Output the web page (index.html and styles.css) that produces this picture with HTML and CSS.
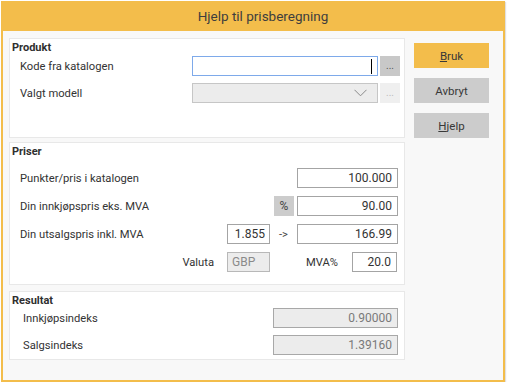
FILE: index.html
```html
<!DOCTYPE html>
<html lang="no">
<head>
    <meta charset="UTF-8">
    <title>Hjelp til prisberegning</title>
    <link rel="stylesheet" href="styles.css">
</head>
<body>
    <div class="window">
        <div class="titlebar">Hjelp til prisberegning</div>
        <div class="window-body">
            <div class="panels">
                <!-- Produkt -->
                <div class="panel panel-produkt">
                    <div class="panel-title">Produkt</div>
                    <div class="row">
                        <span class="label wide">Kode fra katalogen</span>
                        <div class="field field-code focused"><span class="caret"></span></div>
                        <div class="dots">...</div>
                    </div>
                    <div class="row row-gap">
                        <span class="label wide">Valgt modell</span>
                        <div class="field field-code disabled">
                            <svg class="chevron" width="13" height="8" viewBox="0 0 13 8">
                                <polyline points="0.5,0.8 6.5,6.8 12.5,0.8" fill="none" stroke="#8a8a8a" stroke-width="1"/>
                            </svg>
                        </div>
                        <div class="dots dots-off">...</div>
                    </div>
                </div>

                <!-- Priser -->
                <div class="panel panel-priser">
                    <div class="panel-title">Priser</div>
                    <div class="row">
                        <span class="label">Punkter/pris i katalogen</span>
                        <div class="field num">100.000</div>
                    </div>
                    <div class="row row-gap2">
                        <span class="label">Din innkjøpspris eks. MVA</span>
                        <div class="pct">%</div>
                        <div class="field num">90.00</div>
                    </div>
                    <div class="row row-gap2">
                        <span class="label">Din utsalgspris inkl. MVA</span>
                        <div class="field small">1.855</div>
                        <span class="arrow">-&gt;</span>
                        <div class="field num">166.99</div>
                    </div>
                    <div class="row row-gap2 row-end">
                        <span class="label-inline">Valuta</span>
                        <div class="field small disabled">GBP</div>
                        <span class="label-mva">MVA%</span>
                        <div class="field mva">20.0</div>
                    </div>
                </div>

                <!-- Resultat -->
                <div class="panel panel-resultat">
                    <div class="panel-title">Resultat</div>
                    <div class="row">
                        <span class="label label-res">Innkjøpsindeks</span>
                        <div class="field result">0.90000</div>
                    </div>
                    <div class="row row-gap">
                        <span class="label label-res">Salgsindeks</span>
                        <div class="field result">1.39160</div>
                    </div>
                </div>
            </div>

            <div class="buttons">
                <button class="btn btn-primary"><u>B</u>ruk</button>
                <button class="btn">Avbryt</button>
                <button class="btn"><u>H</u>jelp</button>
            </div>
        </div>
    </div>
</body>
</html>
```

FILE: styles.css
```css
* {
    margin: 0;
    padding: 0;
    box-sizing: border-box;
}

body {
    background: #ffffff;
    font-family: Roboto, 'Liberation Sans', sans-serif;
    font-size: 11.2px;
    color: #333333;
}

.window {
    margin: 1px 0 0 1px;
    width: 504px;
    height: 381px;
    border: 2px solid #f3bd4b;
    border-top: 0;
    box-shadow: 1px 1px 1px rgba(0, 0, 0, 0.12);
    display: flex;
    flex-direction: column;
}

.titlebar {
    height: 30px;
    background-color: #f3bd4b;
    color: #3e3e3e;
    font-size: 13.5px;
    line-height: 31px;
    text-align: center;
    padding-left: 20px;
}

.window-body {
    flex: 1;
    display: flex;
    background-color: #f8f8f8;
    padding: 7px 0 0 6px;
}

.panels {
    width: 396px;
    display: flex;
    flex-direction: column;
}

.panel {
    background-color: #ffffff;
    border: 1px solid #e8e8e8;
    padding: 0 3px 0 2px;
}

.panel-produkt {
    height: 100px;
}

.panel-priser {
    margin-top: 4px;
    height: 143px;
}

.panel-resultat {
    margin-top: 6px;
    height: 69px;
}

.panel-title {
    font-weight: bold;
    font-size: 11px;
    height: 17px;
    line-height: 17px;
    color: #2f2f2f;
}

.panel-priser .panel-title {
    height: 16px;
    margin-bottom: 9px;
}

.panel-resultat .panel-title {
    height: 16px;
    margin-bottom: 0;
}

.row {
    display: flex;
    align-items: center;
    height: 20px;
}

.row-gap {
    margin-top: 7px;
}

.row-gap2 {
    margin-top: 8px;
}

.label {
    margin-left: 8px;
    flex: 1;
    white-space: nowrap;
}

.label.wide {
    flex: none;
    width: 172px;
}

.label-res {
    margin-left: 11px;
}

.field {
    height: 20px;
    border: 1px solid #a4a4a4;
    background-color: #ffffff;
    display: flex;
    align-items: center;
    justify-content: flex-end;
    padding-right: 5px;
    font-size: 12px;
    color: #333;
}

.field-code {
    width: 186px;
}

.field-code.focused {
    border-color: #7eaaea;
}

.field.disabled {
    background-color: #ececec;
    border-color: #c6c6c6;
    color: #8a8a8a;
}

.field-code.disabled {
    padding-right: 10px;
}

.caret {
    width: 1px;
    height: 15px;
    background-color: #000;
}

.dots {
    width: 20px;
    height: 20px;
    margin-left: 2px;
    background-color: #c8c8c8;
    color: #555;
    font-size: 10px;
    line-height: 20px;
    text-align: center;
}

.dots-off {
    background-color: #efefef;
    color: #bbb;
}

.num {
    width: 101px;
    margin-right: 3px;
}

.pct {
    width: 20px;
    height: 20px;
    margin-right: 3px;
    background-color: #cccccc;
    text-align: center;
    line-height: 20px;
    font-size: 12px;
    color: #444;
}

.small {
    width: 43px;
    padding-right: 4px;
}

.small.disabled {
    justify-content: flex-start;
    padding-left: 4px;
    border-color: #b8b8b8;
}

.arrow {
    width: 27px;
    padding-left: 9px;
    color: #444;
}

.row-end {
    justify-content: flex-end;
}

.label-inline {
    margin-right: 13px;
}

.label-mva {
    margin-left: 36px;
    width: 46px;
}

.mva {
    width: 45px;
    margin-right: 4px;
}

.result {
    width: 125px;
    margin-right: 3px;
    background-color: #ececec;
    border-color: #a8a8a8;
    color: #7a7a7a;
}

.buttons {
    margin-left: 9px;
    padding-top: 5px;
    display: flex;
    flex-direction: column;
    gap: 10px;
}

.btn {
    width: 75px;
    height: 25px;
    border: none;
    background-color: #cccccc;
    font-family: Roboto, 'Liberation Sans', sans-serif;
    font-size: 11.5px;
    color: #383838;
}

.btn-primary {
    background-color: #f3bd4b;
}
```
